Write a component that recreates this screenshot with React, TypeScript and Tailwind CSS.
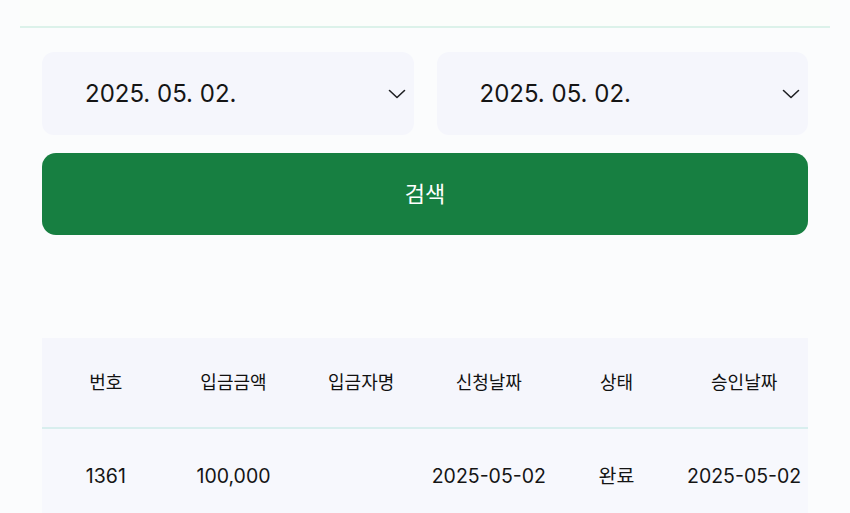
import React, { useState } from 'react';

type Deposit = {
  id: number;
  amount: number;
  depositor: string;
  requestedAt: string;
  status: string;
  approvedAt: string;
};

const COLUMNS = ['번호', '입금금액', '입금자명', '신청날짜', '상태', '승인날짜'];

const ROWS: Deposit[] = [
  { id: 1361, amount: 100000, depositor: '', requestedAt: '2025-05-02', status: '완료', approvedAt: '2025-05-02' },
];

const FONT = { fontFamily: 'Inter, "Noto Sans CJK KR", sans-serif' };

function ChevronDown() {
  return (
    <svg width="18" height="10" viewBox="0 0 18 10" fill="none" className="shrink-0">
      <path d="M1.5 1.5 L9 8.5 L16.5 1.5" stroke="#1f2023" strokeWidth="1.6" strokeLinecap="round" strokeLinejoin="round" />
    </svg>
  );
}

function DateSelect({ value }: { value: string }) {
  return (
    <button className="flex h-[83px] flex-1 items-center justify-between rounded-[12px] bg-[#f5f6fc] pl-[43px] pr-[8px] text-left">
      <span className="text-[24px] leading-none text-[#151515]">{value}</span>
      <ChevronDown />
    </button>
  );
}

export default function App() {
  const [from] = useState('2025. 05. 02.');
  const [to] = useState('2025. 05. 02.');

  return (
    <div className="min-h-[513px] w-[850px] bg-[#fbfcfd]" style={FONT}>
      <div className="mx-[20px] h-[28px] border-b-2 border-[#dcf2ea] bg-[#fbfdfb]" />
      <div className="px-[42px] pt-[24px]">
        <div className="flex gap-[23px]">
          <DateSelect value={from} />
          <DateSelect value={to} />
        </div>
        <button className="mt-[18px] flex h-[82px] w-full items-center justify-center rounded-[14px] bg-[#177f41] text-[22px] text-white">
          검색
        </button>

        <div className="mt-[103px]">
          <div className="grid h-[91px] grid-cols-6 items-center border-b-2 border-[#d8eeee] bg-[#f5f6fc] text-center text-[18px] text-[#111111]">
            {COLUMNS.map((c) => (
              <div key={c}>{c}</div>
            ))}
          </div>
          {ROWS.map((r) => (
            <div key={r.id} className="grid h-[96px] grid-cols-6 items-center bg-[#f7f8fd] text-center text-[19.5px] text-[#151515]">
              <div>{r.id}</div>
              <div>{r.amount.toLocaleString('en-US')}</div>
              <div>{r.depositor}</div>
              <div>{r.requestedAt}</div>
              <div>{r.status}</div>
              <div>{r.approvedAt}</div>
            </div>
          ))}
        </div>
      </div>
    </div>
  );
}
